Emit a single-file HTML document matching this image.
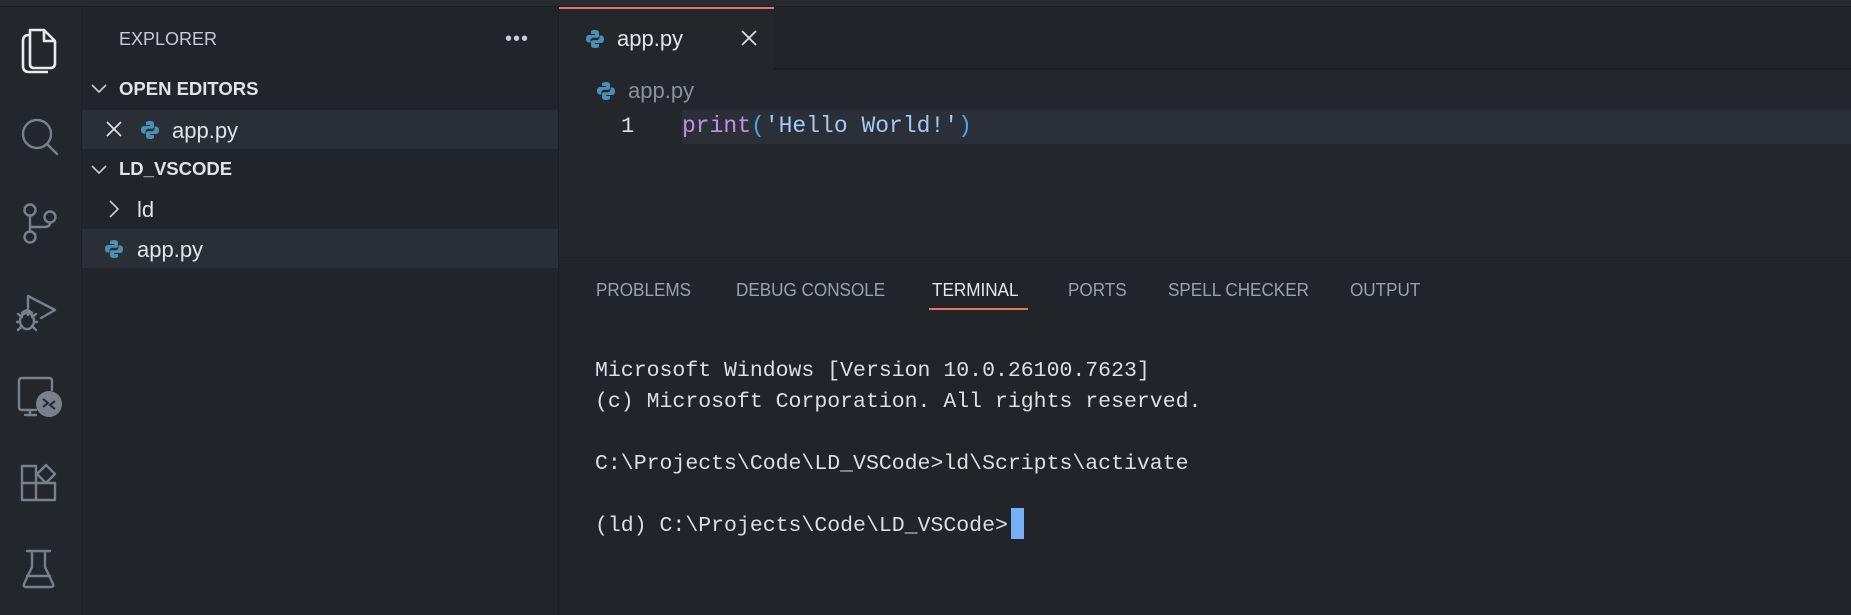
<!DOCTYPE html>
<html><head><meta charset="utf-8"><style>
*{margin:0;padding:0;box-sizing:border-box}
body{width:1851px;height:615px;background:#23272c;position:relative;overflow:hidden;font-family:"Liberation Sans",sans-serif;color:#d7dae0}
.a{position:absolute}
.t{position:absolute;white-space:nowrap;line-height:1}
.mono{font-family:"Liberation Mono",monospace}
svg{position:absolute;overflow:visible}
</style></head><body>
<div class="a" style="left:0;top:0;width:1851px;height:6px;background:#272b30"></div>
<div class="a" style="left:0;top:6px;width:1851px;height:1px;background:#1b1e22"></div>
<div class="a" style="left:0;top:7px;width:82px;height:608px;background:#23272c"></div>
<div class="a" style="left:81px;top:7px;width:1px;height:608px;background:#1e2125"></div>
<div class="a" style="left:82px;top:7px;width:476px;height:608px;background:#212428"></div>
<div class="a" style="left:558px;top:7px;width:1px;height:608px;background:#1c1f23"></div>
<div class="a" style="left:82px;top:110px;width:476px;height:39px;background:#2a2e35"></div>
<div class="a" style="left:82px;top:229px;width:476px;height:39px;background:#2a2e35"></div>
<div class="t" style="left:119px;top:30px;font-size:18px;color:#c8ccd2">EXPLORER</div>
<div class="t" style="left:505px;top:29px;font-size:20px;color:#c8ccd2;letter-spacing:1px">&#8226;&#8226;&#8226;</div>
<svg style="left:91px;top:84px" width="16" height="10"><path d="M1 1 L8 8 L15 1" stroke="#c8ccd2" stroke-width="1.6" fill="none"/></svg>
<div class="t" style="left:119px;top:80px;font-size:18.5px;font-weight:bold;color:#e0e3e8">OPEN EDITORS</div>
<svg style="left:106px;top:121px" width="16" height="16"><path d="M1 1 L15 15 M15 1 L1 15" stroke="#e0e3e8" stroke-width="1.7"/></svg>
<svg style="left:140px;top:120px" width="20" height="20" viewBox="0 0 20 20"><path d="M9.5 1 C5.5 1 6 3 6 3 V5 H10 V6 H4 C2 6 1 7.5 1 10 C1 12.5 2.5 13.5 4 13.5 H5.5 V11.5 C5.5 10 6.8 8.8 8 8.8 H12 C13.4 8.8 14 7.8 14 6.5 V3.5 C14 2 12.5 1 9.5 1Z" fill="#4a8fb5"/><path d="M10.5 19 C14.5 19 14 17 14 17 V15 H10 V14 H16 C18 14 19 12.5 19 10 C19 7.5 17.5 6.5 16 6.5 H14.5 V8.5 C14.5 10 13.2 11.2 12 11.2 H8 C6.6 11.2 6 12.2 6 13.5 V16.5 C6 18 7.5 19 10.5 19Z" fill="#4a8fb5"/></svg>
<div class="t" style="left:172px;top:120px;font-size:22px;color:#e0e3e8">app.py</div>
<svg style="left:91px;top:165px" width="16" height="10"><path d="M1 1 L8 8 L15 1" stroke="#c8ccd2" stroke-width="1.6" fill="none"/></svg>
<div class="t" style="left:119px;top:160px;font-size:18.5px;font-weight:bold;color:#e0e3e8">LD_VSCODE</div>
<svg style="left:109px;top:200px" width="10" height="18"><path d="M1 1 L9 9 L1 17" stroke="#c8ccd2" stroke-width="1.6" fill="none"/></svg>
<div class="t" style="left:137px;top:199px;font-size:22px;color:#e0e3e8">ld</div>
<svg style="left:104px;top:239px" width="20" height="20" viewBox="0 0 20 20"><path d="M9.5 1 C5.5 1 6 3 6 3 V5 H10 V6 H4 C2 6 1 7.5 1 10 C1 12.5 2.5 13.5 4 13.5 H5.5 V11.5 C5.5 10 6.8 8.8 8 8.8 H12 C13.4 8.8 14 7.8 14 6.5 V3.5 C14 2 12.5 1 9.5 1Z" fill="#4a8fb5"/><path d="M10.5 19 C14.5 19 14 17 14 17 V15 H10 V14 H16 C18 14 19 12.5 19 10 C19 7.5 17.5 6.5 16 6.5 H14.5 V8.5 C14.5 10 13.2 11.2 12 11.2 H8 C6.6 11.2 6 12.2 6 13.5 V16.5 C6 18 7.5 19 10.5 19Z" fill="#4a8fb5"/></svg>
<div class="t" style="left:137px;top:239px;font-size:22px;color:#e0e3e8">app.py</div>
<div class="a" style="left:559px;top:7px;width:1292px;height:61px;background:#212428"></div>
<div class="a" style="left:559px;top:68px;width:1292px;height:2px;background:#1b1e22"></div>
<div class="a" style="left:559px;top:7px;width:215px;height:63px;background:#23272c"></div>
<div class="a" style="left:559px;top:7px;width:215px;height:2px;background:#e8735f"></div>
<svg style="left:585px;top:29px" width="20" height="20" viewBox="0 0 20 20"><path d="M9.5 1 C5.5 1 6 3 6 3 V5 H10 V6 H4 C2 6 1 7.5 1 10 C1 12.5 2.5 13.5 4 13.5 H5.5 V11.5 C5.5 10 6.8 8.8 8 8.8 H12 C13.4 8.8 14 7.8 14 6.5 V3.5 C14 2 12.5 1 9.5 1Z" fill="#4a8fb5"/><path d="M10.5 19 C14.5 19 14 17 14 17 V15 H10 V14 H16 C18 14 19 12.5 19 10 C19 7.5 17.5 6.5 16 6.5 H14.5 V8.5 C14.5 10 13.2 11.2 12 11.2 H8 C6.6 11.2 6 12.2 6 13.5 V16.5 C6 18 7.5 19 10.5 19Z" fill="#4a8fb5"/></svg>
<div class="t" style="left:617px;top:28px;font-size:22px;color:#e0e3e8">app.py</div>
<svg style="left:741px;top:30px" width="16" height="16"><path d="M1 1 L15 15 M15 1 L1 15" stroke="#e0e3e8" stroke-width="1.7"/></svg>
<svg style="left:596px;top:81px" width="20" height="20" viewBox="0 0 20 20"><path d="M9.5 1 C5.5 1 6 3 6 3 V5 H10 V6 H4 C2 6 1 7.5 1 10 C1 12.5 2.5 13.5 4 13.5 H5.5 V11.5 C5.5 10 6.8 8.8 8 8.8 H12 C13.4 8.8 14 7.8 14 6.5 V3.5 C14 2 12.5 1 9.5 1Z" fill="#4a8fb5"/><path d="M10.5 19 C14.5 19 14 17 14 17 V15 H10 V14 H16 C18 14 19 12.5 19 10 C19 7.5 17.5 6.5 16 6.5 H14.5 V8.5 C14.5 10 13.2 11.2 12 11.2 H8 C6.6 11.2 6 12.2 6 13.5 V16.5 C6 18 7.5 19 10.5 19Z" fill="#4a8fb5"/></svg>
<div class="t" style="left:628px;top:80px;font-size:22px;color:#8c9099">app.py</div>
<div class="a" style="left:682px;top:110px;width:1169px;height:34px;background:#2b2f37"></div>
<div class="t mono" style="left:621px;top:116px;font-size:22px;color:#e0e3e8">1</div>
<div class="t mono" style="left:682px;top:115px;font-size:23px"><span style="color:#c58fe6">print</span><span style="color:#4fa3e8">(</span><span style="color:#9fcbf5">'Hello World!'</span><span style="color:#4fa3e8">)</span></div>
<div class="a" style="left:559px;top:257px;width:1292px;height:1px;background:#1b1e22"></div>
<div class="a" style="left:559px;top:258px;width:1292px;height:357px;background:#212529"></div>
<div class="t" style="left:596px;top:281px;font-size:18px;color:#9ca1aa;transform:scaleX(0.95);transform-origin:left">PROBLEMS</div>
<div class="t" style="left:736px;top:281px;font-size:18px;color:#9ca1aa;transform:scaleX(0.95);transform-origin:left">DEBUG CONSOLE</div>
<div class="t" style="left:932px;top:281px;font-size:18px;color:#e6e8ec;transform:scaleX(0.95);transform-origin:left">TERMINAL</div>
<div class="a" style="left:929px;top:308px;width:99px;height:2px;background:#e8735f"></div>
<div class="t" style="left:1068px;top:281px;font-size:18px;color:#9ca1aa;transform:scaleX(0.95);transform-origin:left">PORTS</div>
<div class="t" style="left:1168px;top:281px;font-size:18px;color:#9ca1aa;transform:scaleX(0.95);transform-origin:left">SPELL CHECKER</div>
<div class="t" style="left:1350px;top:281px;font-size:18px;color:#9ca1aa;transform:scaleX(0.95);transform-origin:left">OUTPUT</div>
<div class="a mono" style="left:595px;top:356px;font-size:21.5px;line-height:31px;color:#dcdfe4;white-space:pre">Microsoft Windows [Version 10.0.26100.7623]
(c) Microsoft Corporation. All rights reserved.

C:\Projects\Code\LD_VSCode>ld\Scripts\activate

(ld) C:\Projects\Code\LD_VSCode></div>
<div class="a" style="left:1011px;top:508px;width:13px;height:31px;background:#76b1f5"></div>
<svg style="left:0;top:0" width="82" height="615">
<g fill="none" stroke="#7a808a" stroke-width="2.4" stroke-linecap="round" stroke-linejoin="round">
<circle cx="37" cy="134" r="14"/><path d="M47 144 L57 154"/>
<circle cx="30" cy="210" r="5.5"/><circle cx="30" cy="237" r="5.5"/><circle cx="50" cy="217" r="5.5"/><path d="M30 216 V231 M30 227 H44 Q50 227 50 223"/>
<path d="M28 315 L28 296 L55 310 L41 318"/><ellipse cx="27" cy="321" rx="7" ry="8"/><path d="M18 314 L22 317 M36 314 L32 317 M17 322 H20 M34 322 H37 M18 330 L22 326 M36 330 L32 326 M22 313 Q27 308 32 313"/>
<path d="M36 410 H22 Q19 410 19 407 V381 Q19 378 22 378 H49 Q52 378 52 381 V390 M30 410 V414 M25 415 H36"/>
<path d="M22 466 H36 V500 H22 Z M22 483 H55 V500 H36 M37 474 L46 465 L55 474 L46 483 Z"/>
<path d="M27 551 H50 M32 551 V567 L24 584 Q23 587 26 587 H51 Q54 587 53 584 L45 567 V551 M27 576 H50"/>
</g>
<circle cx="49" cy="404" r="13" fill="#7a808a"/><path d="M43 399 L48 403 L43 407 M55 401 L50 405 L55 409" stroke="#23272c" stroke-width="2" fill="none"/>
<path d="M29 35 Q23 35 23 41 V66 Q23 72 29 72 H48" fill="none" stroke="#e8eaee" stroke-width="2.6"/>
<path d="M30 30 H44 L55 41 V63 Q55 68 50 68 H34 Q30 68 30 64 Z M44 30 V41 H55" fill="none" stroke="#e8eaee" stroke-width="2.6" stroke-linejoin="round"/>
</svg>
</body></html>
